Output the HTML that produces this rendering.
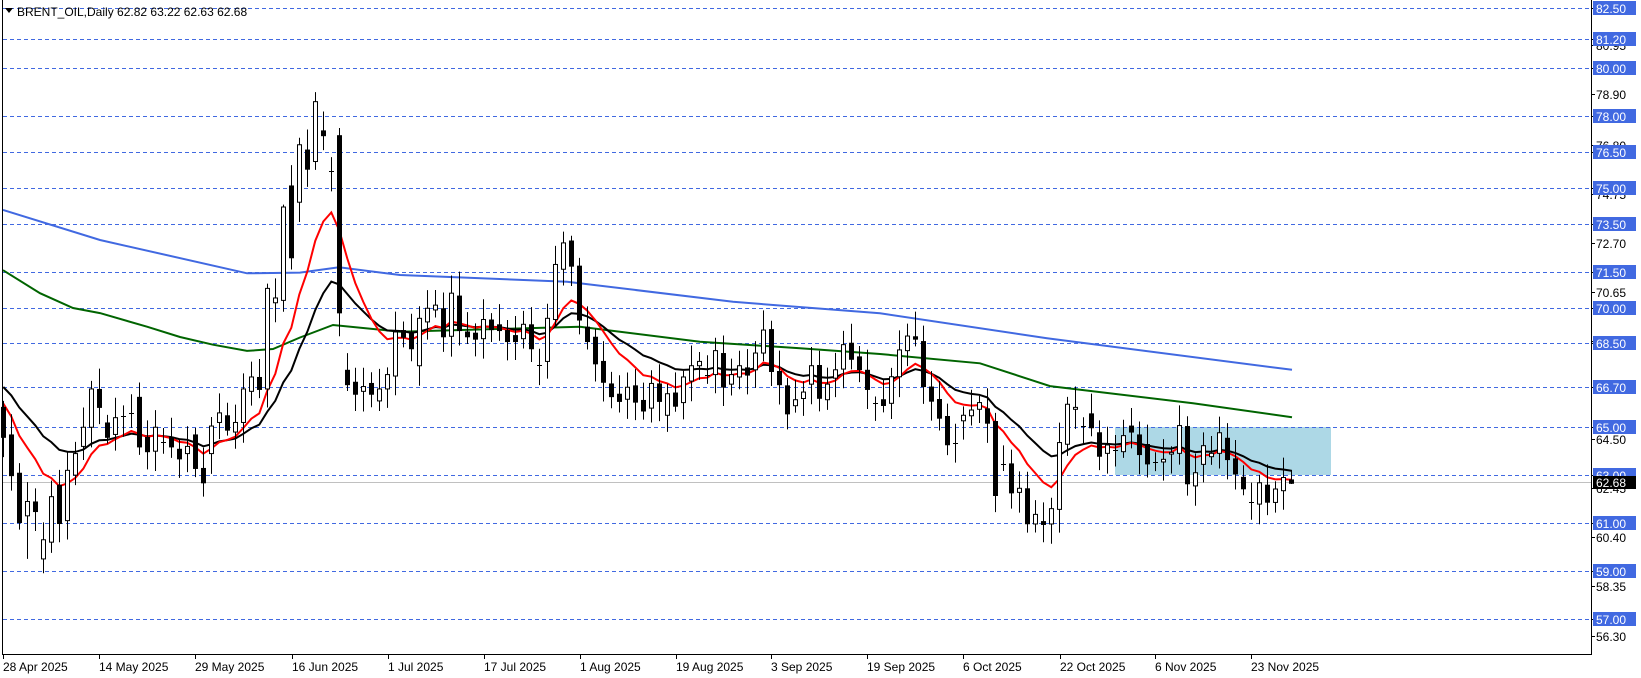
<!DOCTYPE html>
<html><head><meta charset="utf-8"><style>
html,body{margin:0;padding:0;background:#fff;width:1641px;height:678px;overflow:hidden}
svg{display:block}
text{font-family:"Liberation Sans",sans-serif;font-size:12px}
</style></head><body>
<svg id="s" width="1641" height="678" xmlns="http://www.w3.org/2000/svg">
<rect x="0" y="0" width="1641" height="678" fill="#fff"/>
<rect x="1115" y="427" width="216" height="48" fill="#add8e6"/>
<g id="grid"></g>
<line x1="2" y1="482.5" x2="1591" y2="482.5" stroke="#c0c0c0" stroke-width="1"/>
<g id="ma"></g>
<g id="c"></g>
<line x1="1591.5" y1="0" x2="1591.5" y2="655" stroke="#000"/>
<line x1="2.5" y1="0" x2="2.5" y2="655" stroke="#000"/>
<line x1="2" y1="654.5" x2="1592" y2="654.5" stroke="#000"/>
<g id="ax"></g>
<path d="M5,8 L13,8 L9,13 Z" fill="#000"/>
<text x="17" y="16" fill="#000">BRENT_OIL,Daily  62.82 63.22 62.63 62.68</text>
<g id="blk"></g>
<g id="lab"></g>
<rect x="1593" y="476" width="43" height="13" fill="#000"/>
<text x="1596" y="487" fill="#fff">62.68</text>
<g fill="#000">
<text x="3" y="671">28 Apr 2025</text>
<text x="99" y="671">14 May 2025</text>
<text x="195" y="671">29 May 2025</text>
<text x="292" y="671">16 Jun 2025</text>
<text x="388" y="671">1 Jul 2025</text>
<text x="484" y="671">17 Jul 2025</text>
<text x="580" y="671">1 Aug 2025</text>
<text x="676" y="671">19 Aug 2025</text>
<text x="771" y="671">3 Sep 2025</text>
<text x="867" y="671">19 Sep 2025</text>
<text x="963" y="671">6 Oct 2025</text>
<text x="1060" y="671">22 Oct 2025</text>
<text x="1155" y="671">6 Nov 2025</text>
<text x="1251" y="671">23 Nov 2025</text>
</g>
</svg>
<script>
var NS="http://www.w3.org/2000/svg";
function Y(p){return 8.3+(82.5-p)*23.94;}
function el(g,t,a){var e=document.createElementNS(NS,t);for(var k in a)e.setAttribute(k,a[k]);document.getElementById(g).appendChild(e);return e;}
[80.95,78.90,76.80,74.75,72.70,70.65,68.60,64.50,62.45,60.40,58.35,56.30].forEach(function(p){var y=Math.round(Y(p));
var t=el("blk","text",{x:1596,y:y+5,fill:"#000"});t.textContent=p.toFixed(2);
el("ax","line",{x1:1591,y1:y+0.5,x2:1595,y2:y+0.5,stroke:"#000"});});
var levels=[82.5,81.2,80,78,76.5,75,73.5,71.5,70,68.5,66.7,65,63,61,59,57];
levels.forEach(function(p){var y=Math.round(Y(p))+0.5;
el("grid","line",{x1:3,y1:y,x2:1591,y2:y,stroke:"#4169e1","stroke-dasharray":"4,3","stroke-width":1});
el("lab","rect",{x:1593,y:Math.round(Y(p))-7,width:43,height:14,fill:"#4169e1"});
var t=el("lab","text",{x:1596,y:Math.round(Y(p))+5,fill:"#fff"});t.textContent=p.toFixed(2);
el("ax","line",{x1:1591,y1:y,x2:1595,y2:y,stroke:"#000"});
});
[3,99,195,292,388,484,580,676,771,867,963,1060,1155,1251].forEach(function(x){el("ax","line",{x1:x+0.5,y1:654,x2:x+0.5,y2:659,stroke:"#000"});});
var D=[[65.85,64.6],[64.7,63.0],[63.1,61.04],[61.3,61.9],[61.9,61.5],[59.5,60.3],[60.2,62.1],[62.6,61.0],[61.1,63.2],[63.0,63.9],[64.2,65.0],[65.0,66.6],[66.6,65.85],[65.2,64.6],[64.7,65.4],[65.45,65.45],[65.6,65.6],[66.27,64.2],[64.6,64.0],[64.0,65.0],[64.4,64.4],[64.6,64.2],[64.1,63.7],[63.9,64.2],[64.7,63.3],[63.3,62.7],[63.9,65.05],[65.2,65.6],[65.5,64.9],[64.8,65.2],[65.2,66.6],[66.5,67.1],[67.1,66.6],[66.6,70.8],[70.2,70.4],[70.3,74.2],[75.1,72.1],[74.4,76.8],[76.6,75.8],[76.1,78.6],[77.4,77.2],[75.7,75.7],[77.2,69.8],[67.4,66.8],[66.9,66.4],[66.5,66.7],[66.85,66.4],[66.1,66.6],[66.6,67.2],[67.14,68.98],
[69.06,68.78],[68.92,68.3],[67.57,69.55],[69.4,69.97],[69.9,70.1],[69.97,68.8],[68.8,70.6],[70.5,69.06],[69.0,68.8],[68.95,68.7],[68.7,69.5],[69.5,69.1],[69.3,69.06],[69.06,68.6],[68.85,68.6],[68.7,69.3],[69.3,68.3],[67.6,67.6],[67.75,69.55],[69.5,71.8],[71.6,72.7],[72.8,71.75],[71.75,69.5],[69.2,68.6],[68.78,67.67],[67.77,66.9],[66.83,66.3],[66.4,66.1],[66.17,66.67],[66.75,66.07],[66.14,65.7],[65.8,66.83],[66.83,66.1],[65.5,66.4],[66.45,65.9],[66.03,67.1],[66.93,67.57],[67.57,67.75],[67.2,67.2],[67.2,68.2],[68.1,66.7],[66.8,67.2],[67.1,67.57],[67.5,67.2],[67.4,68.1],[68.1,69.06],[69.1,67.35],[67.35,66.8],[66.75,65.58],[65.9,66.15],[66.2,66.47],[66.8,67.57],[67.6,66.23],[66.15,66.8],[67.05,67.4],[67.43,68.45],[68.53,67.86],[67.96,67.43],[67.4,66.6],[66.0,66.0],
[66.17,65.93],[66.0,67.11],[67.11,68.23],[68.2,68.81],[68.8,68.7],[68.6,66.72],[66.7,66.11],[66.18,65.4],[65.47,64.29],[64.33,64.33],[65.27,65.5],[65.48,65.72],[65.75,66.03],[65.79,65.19],[65.26,62.17],[63.45,63.45],[63.49,62.28],[62.28,62.45],[62.45,60.99],[60.96,61.36],[61.08,60.96],[60.96,61.6],[61.57,64.36],[64.29,65.96],[65.75,65.83],[65.07,65.07],[65.58,65.0],[64.79,63.81],[63.91,64.26],[64.05,64.05],[63.98,64.65],[65.07,64.82],[64.7,63.88],[64.3,63.49],[63.56,63.56],[63.55,63.66],[63.88,63.95],[63.91,65.07],[65.05,62.66],[62.55,63.1],[63.45,64.23],[63.77,63.91],[63.91,64.77],[64.56,63.67],[63.7,63.07],[62.93,62.45],[61.86,61.86],[61.79,62.68],[62.6,61.89],[61.86,62.42],[62.35,62.9],[62.82,62.68]];
var HI={39:79.0,42:77.5,71:73.0,114:69.83,57:71.5,35:74.3,33:71.0,134:66.7,124:65.6,161:63.22};
var LO={5:58.9,42:68.8,3:59.5,132:60.6,161:62.63,128:60.6};
function X(i){return 3.3+8*i;}
D.forEach(function(d,i){var o=d[0],c=d[1],x=Math.round(X(i));
var r1=0.25+0.6*Math.abs(Math.sin(i*1.7)),r2=0.25+0.6*Math.abs(Math.cos(i*2.3));
var h=HI[i]!==undefined?HI[i]:Math.max(o,c)+r1,l=LO[i]!==undefined?LO[i]:Math.min(o,c)-r2;
el("c","line",{x1:x+0.5,y1:Y(h),x2:x+0.5,y2:Y(l),stroke:"#000"});
var top=Y(Math.max(o,c)),bot=Y(Math.min(o,c)),hh=Math.max(bot-top,1);
if(Math.abs(o-c)<0.03){el("c","line",{x1:x-2,y1:Math.round(top)+0.5,x2:x+3,y2:Math.round(top)+0.5,stroke:"#000"});}
else if(c>o){el("c","rect",{x:x-1.5,y:top,width:4,height:hh,fill:"#fff",stroke:"#000","stroke-width":1});}
else{el("c","rect",{x:x-2,y:top,width:5,height:hh+1,fill:"#000"});}
});
function poly(pts,col,w){var s=pts.map(function(p){return p[0]+","+Y(p[1]).toFixed(1)}).join(" ");el("ma","polyline",{points:s,fill:"none",stroke:col,"stroke-width":w});}
poly([[3,74.08],[100,72.82],[247,71.43],[300,71.46],[339,71.68],[400,71.36],[567,71.08],[733,70.24],[880,69.76],[1047,68.72],[1292,67.4]],"#4169e1",2);
poly([[3,71.56],[40,70.6],[73,69.98],[100,69.77],[147,69.2],[180,68.77],[213,68.45],[247,68.19],[273,68.27],[300,68.75],[333,69.27],[400,68.99],[580,69.2],[700,68.57],[800,68.3],[880,68.06],[980,67.67],[1050,66.72],[1193,66.0],[1292,65.42]],"#006400",2);
function ema(n,seed){var a=2/(n+1),v=seed,out=[];D.forEach(function(d,i){v=v+a*(d[1]-v);out.push([X(i),v]);});return out;}
poly(ema(20,66.9),"#000",2);
poly(ema(10,66.3),"#ff0000",2);
</script>
</body></html>
